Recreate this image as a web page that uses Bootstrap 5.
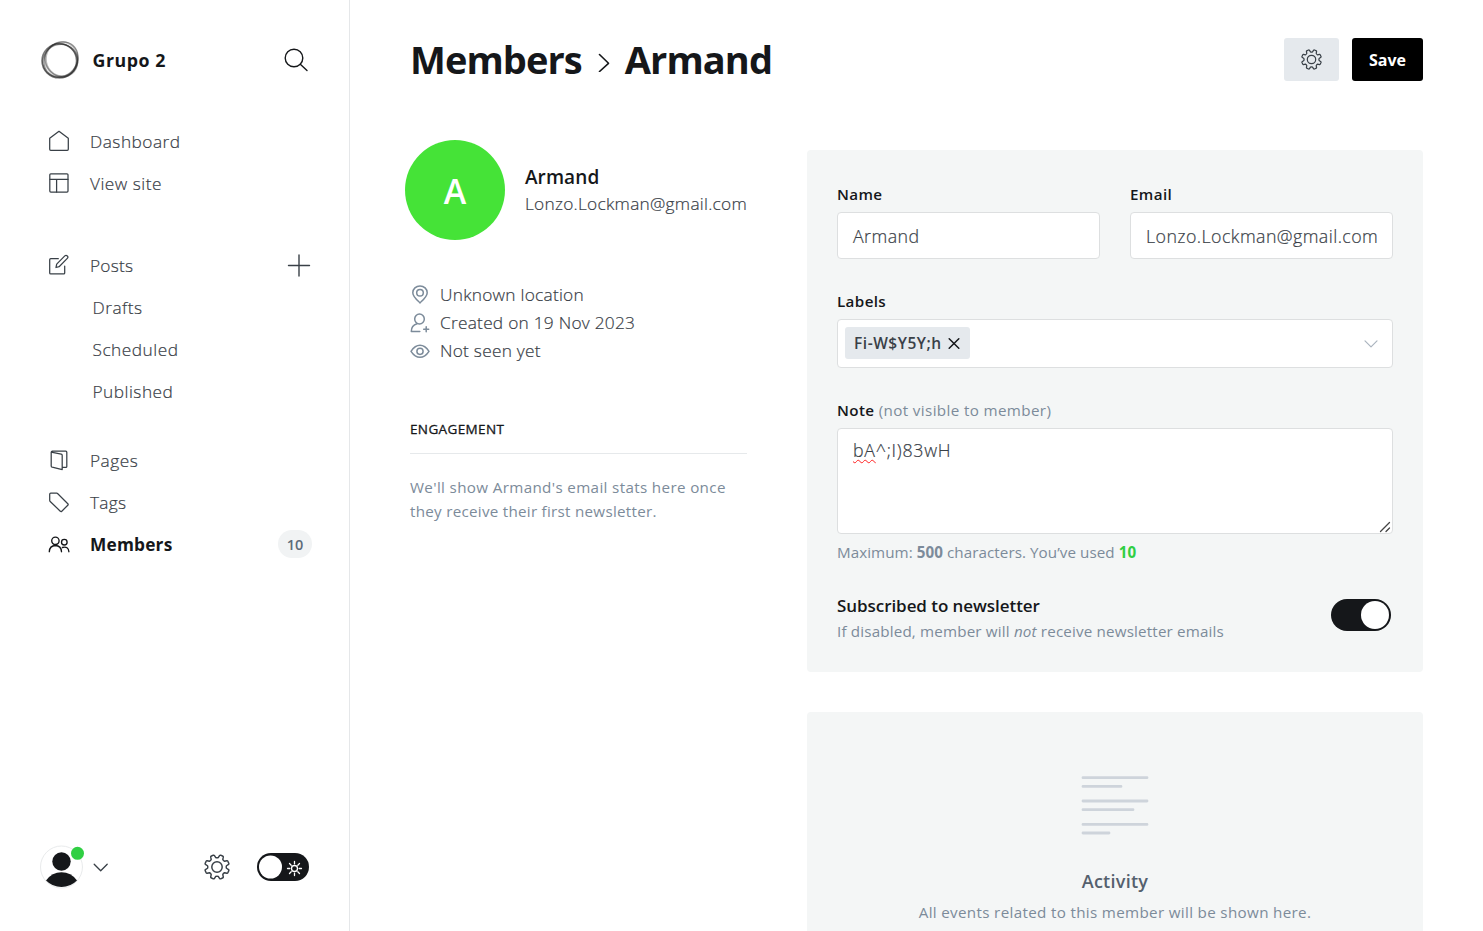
<!DOCTYPE html>
<html lang="en">
<head>
<meta charset="utf-8">
<title>Members - Armand</title>
<link href="https://cdn.jsdelivr.net/npm/bootstrap@5.3.0/dist/css/bootstrap.min.css" rel="stylesheet">
<style>
body{font-family:"Open Sans",sans-serif;color:#15171a;background:#fff;height:931px;overflow:hidden;font-size:17.3px}
svg{display:block;flex:none;fill:none;stroke-linecap:round;stroke-linejoin:round}
svg:not([stroke]){stroke:currentColor}
.sidebar{width:350px;border-right:1px solid #e5e7e9;color:#394047}
.brand{height:120px;padding:0 41px;color:#15171a}
.brand-name{font-size:17.8px;font-weight:700;margin-left:13.5px;letter-spacing:.54px}
.menu-row{height:42px;padding:0 38px 0 48px;font-weight:300;line-height:42px;letter-spacing:.49px;-webkit-text-stroke:.2px}
.menu-row .lbl{margin-left:20px;position:relative;top:1px}
.menu-row.sub{padding-left:92.5px}
.menu-row.sub .lbl{margin-left:0}
.menu-row.current{font-weight:700;color:#15171a;padding-right:37px;letter-spacing:.2px;-webkit-text-stroke:0}
.tight{letter-spacing:.25px}
.gap-lg{height:40px}
.gap-sm{height:27px}
.count{width:34px;height:28px;border-radius:14px;background:#f1f3f4;color:#5d6b79;font-size:14.5px;font-weight:600;line-height:30px;text-align:center;letter-spacing:0}
.foot{height:44px;padding:0 40px;margin-bottom:42px}
.user-pic{width:42px;height:42px}
.night{width:52px;height:28px;border-radius:14px;background:#15171a;color:#fff;margin-left:27.5px}
.content{padding:0 60px}
.topbar{height:119px}
h1{font-size:38px;font-weight:700;line-height:50px;margin:0 0 1px;letter-spacing:-.92px}
.h1-sep{margin:5px 15px 0 16px}
.btn-gear{width:55px;height:43px;border-radius:3px;background:#e5e9ed;color:#394047;padding:0}
.btn-save{width:71px;height:43px;border-radius:3px;background:#000;color:#fff;font-size:16px;font-weight:700;padding:0}
.actions{gap:13px}
.profile{width:337px;padding-top:21px}
.face{width:100px;height:100px;background:#45e337;color:#fff;font-size:34px;font-weight:600;margin-left:-5px;padding-top:3px}
.who{margin-left:20px}
.pname{font-size:19px;font-weight:600;line-height:27px;letter-spacing:.1px}
.soft{color:#394047;font-weight:300;letter-spacing:.25px;-webkit-text-stroke:.2px}
.pmail{line-height:26px;letter-spacing:.27px}
.meta{color:#7c8b9a;padding-top:41px}
.meta>div{height:28px}
.meta .soft{margin-left:10px}
.eng{font-size:13.5px;letter-spacing:.37px;border-bottom:1px solid #e6e9eb;height:40px;line-height:31px;margin-top:49px;-webkit-text-stroke:.3px}
.hint{color:#7c8b9a;font-size:15.2px;line-height:24px;letter-spacing:.35px}
.hint.stats{margin-top:21px}
.stats-2{letter-spacing:.27px}
.forms{width:616px;padding-top:31px}
.panel{background:#f4f6f6;border-radius:4px}
.panel-form{height:522px;padding:32px 30px 0}
.panel-activity{height:260px;margin-top:40px;padding-top:63px}
.fields{gap:30px}
.fields>div{width:263px}
.cap{font-size:15.2px;font-weight:600;line-height:24px;letter-spacing:.37px}
.cap-note{font-weight:400;color:#7c8b9a}
.cap-next{margin-top:30px}
.box{background:#fff;border:1px solid #dddfe0;border-radius:4px;font-weight:300;color:#394047;font-size:17.8px;margin-top:6px;letter-spacing:.44px;-webkit-text-stroke:.2px}
.box-line{height:47px;padding:2px 15px 0}
.box-tags{height:49px;padding:0 13px 2px 7px}
.box-note{height:106px;padding:8px 15px;letter-spacing:.74px}
.token{background:#e5e9ed;border-radius:3px;width:125px;height:32px;font-size:15.5px;font-weight:600;color:#394047;letter-spacing:.53px;-webkit-text-stroke:0;padding:0 10px 0 9px}
.token span{padding-top:2px}
.squig{text-decoration:underline wavy #f22 1.3px;text-underline-offset:2px;text-decoration-skip-ink:none}
.limit{margin-top:6px;letter-spacing:.06px}
.news{margin-top:28px;padding-right:2px}
.news-title{font-weight:600;font-size:17px;line-height:27px;letter-spacing:-.06px}
.news-hint{letter-spacing:.165px}
.switch-on{width:60px;height:32px;border-radius:16px;background:#15171a;padding:2px;margin-top:7px}
.knob{width:28px;height:28px;border-radius:50%;background:#fff}
.act-title{font-size:18px;font-weight:600;color:#54606d;line-height:28px;margin-top:32px;letter-spacing:.26px}
.act-hint{margin-top:5px;letter-spacing:.33px}
</style>
</head>
<body class="d-flex">
<svg width="0" height="0" class="position-absolute"><defs><g id="gear"><path d="M8.72-1.15Q8.2 0 8.72 1.15L10.72 2.47Q11.1 2.8 10.9 3.4L9.9 5.5Q9.7 5.9 9.1 5.8L6.98 5.36Q5.8 5.8 5.36 6.98L5.8 9.1Q5.9 9.7 5.5 9.9L3.4 10.9Q2.8 11.1 2.47 10.72L1.15 8.72Q0 8.2-1.15 8.72L-2.47 10.72Q-2.8 11.1-3.4 10.9L-5.5 9.9Q-5.9 9.7-5.8 9.1L-5.36 6.98Q-5.8 5.8-6.98 5.36L-9.1 5.8Q-9.7 5.9-9.9 5.5L-10.9 3.4Q-11.1 2.8-10.72 2.47L-8.72 1.15Q-8.2 0-8.72-1.15L-10.72-2.47Q-11.1-2.8-10.9-3.4L-9.9-5.5Q-9.7-5.9-9.1-5.8L-6.98-5.36Q-5.8-5.8-5.36-6.98L-5.8-9.1Q-5.9-9.7-5.5-9.9L-3.4-10.9Q-2.8-11.1-2.47-10.72L-1.15-8.72Q0-8.2 1.15-8.72L2.47-10.72Q2.8-11.1 3.4-10.9L5.5-9.9Q5.9-9.7 5.8-9.1L5.36-6.98Q5.8-5.8 6.98-5.36L9.1-5.8Q9.7-5.9 9.9-5.5L10.9-3.4Q11.1-2.8 10.72-2.47Z"/><circle r="4.8"/></g></defs></svg>
<aside class="sidebar d-flex flex-column flex-shrink-0 vh-100">
  <div class="brand d-flex align-items-center">
    <svg width="38" height="38" viewBox="0 0 38 38" stroke="#222"><ellipse cx="18.300" cy="19.800" rx="17.300" ry="17" stroke-width="1.600" opacity=".6"/><ellipse cx="20" cy="18.300" rx="18.300" ry="16" transform="rotate(-50 20 18.300)" stroke-width="1.200" opacity=".45"/><ellipse cx="20.200" cy="19" rx="17.200" ry="15.600" transform="rotate(50 20 19)" stroke-width="1.500" opacity=".4"/><ellipse cx="19.300" cy="20" rx="17.600" ry="16.400" transform="rotate(-20 19 20)" stroke-width="1.300" opacity=".5"/><ellipse cx="21" cy="18" rx="16" ry="17" stroke-width="1.600" opacity=".3"/></svg>
    <span class="brand-name">Grupo 2</span>
    <svg class="ms-auto" width="24" height="24" viewBox="0 0 24 24" stroke-width="1.4"><circle cx="10" cy="10" r="8.8"/><path d="M16.3 16.3l6.7 6.2"/></svg>
  </div>
  <nav>
    <div class="menu-row d-flex align-items-center"><svg width="22" height="22" viewBox="0 0 22 22" stroke-width="1.25"><path d="M1.7 8.3 11 1.3l9.3 7v11q0 1-1 1H2.7q-1 0-1-1z"/></svg><span class="lbl">Dashboard</span></div>
    <div class="menu-row d-flex align-items-center"><svg width="22" height="22" viewBox="0 0 22 22" stroke-width="1.25"><rect x="1.8" y="1.8" width="18.2" height="18.2" rx="1"/><path d="M2 7.3h18M8.6 7.3V20"/></svg><span class="lbl">View site</span></div>
    <div class="gap-lg"></div>
    <div class="menu-row d-flex align-items-center"><svg width="22" height="22" viewBox="0 0 22 22" stroke-width="1.25"><path d="M10.3 4.7H2.7q-1 0-1 1v13.2q0 1 1 1h13q1 0 1-1v-6.8M8 13.5l.7-3.4 8.1-8.2q1.2-1.1 2.5 0 1.2 1.3 0 2.500l-8.200 8.300z"/></svg><span class="lbl tight">Posts</span><svg class="ms-auto" width="24" height="24" viewBox="0 0 24 24" stroke-width="1.4"><path d="M1.5 12.500h21M12 2v21"/></svg></div>
    <div class="menu-row sub"><span class="lbl">Drafts</span></div>
    <div class="menu-row sub"><span class="lbl">Scheduled</span></div>
    <div class="menu-row sub"><span class="lbl">Published</span></div>
    <div class="gap-sm"></div>
    <div class="menu-row d-flex align-items-center"><svg width="22" height="22" viewBox="0 0 22 22" stroke-width="1.25"><path d="M3.200 3.200 13.200 5.200q1 .2 1 1.200v14.200l-10-2.400q-1-.3-1-1.300zM3.200 3.200Q3.400 2.200 4.200 2.200h13.600q1 0 1 1v14.200q0 .9-1 .9h-3.400"/></svg><span class="lbl">Pages</span></div>
    <div class="menu-row d-flex align-items-center"><svg width="22" height="22" viewBox="0 0 22 22" stroke-width="1.250"><path d="M1.700 3.200q0-1 1-1h6q.6 0 1.100.5l10 10q.8.800 0 1.500l-6 6q-.8.800-1.500 0L2.200 10.500q-.5-.5-.5-1.200z"/></svg><span class="lbl tight">Tags</span></div>
    <div class="menu-row current d-flex align-items-center"><svg width="22" height="22" viewBox="0 0 22 22" stroke-width="1.350"><circle cx="7.400" cy="7.800" r="3.700"/><circle cx="16.300" cy="9.200" r="2.800"/><path d="M1.300 18.700q.3-6.100 6.100-6.200 5.700.1 6.100 6.200M14.400 14.500q6-1.600 6.500 4.200"/></svg><span class="lbl">Members</span><span class="count ms-auto">10</span></div>
  </nav>
  <div class="foot mt-auto d-flex align-items-center">
    <svg class="user-pic" viewBox="0 0 42 42" overflow="visible" stroke="none"><circle cx="21.500" cy="21" r="21" fill="#fff" stroke="#e9ebec"/><circle cx="21.500" cy="15.500" r="9.200" fill="#15171a"/><path d="M6 34.500q6-8.200 15.500-8.200T37 34.500q-6.500 6.500-15.500 6.500T6 34.500z" fill="#15171a"/><circle cx="37.500" cy="7.300" r="6.500" fill="#30cf43"/></svg>
    <svg class="ms-2 me-auto" width="21" height="14" viewBox="0 0 21 14" stroke-width="1.300"><path d="m4.200 4.200 6.500 6.600 6.500-6.600"/></svg>
    <svg width="26" height="26" viewBox="-12 -12 24 24" stroke-width="1.350"><use href="#gear"/></svg>
    <span class="night d-flex align-items-center"><svg width="52" height="28" viewBox="0 0 52 28" stroke-width="1.300"><circle cx="13.500" cy="14" r="11.500" fill="#fff" stroke="none"/><circle cx="37.500" cy="15.500" r="3"/><path d="M37.500 8.500v2.300M37.500 20.200v2.300M30.500 15.500h2.300M42.200 15.500h2.300M32.500 10.500l1.700 1.700M40.800 18.800l1.700 1.700M32.500 20.500l1.700-1.700M40.800 12.200l1.700-1.700"/></svg></span>
  </div>
</aside>
<main class="content flex-grow-1">
  <header class="topbar d-flex align-items-center">
    <h1 class="d-flex align-items-center"><span>Members</span><svg class="h1-sep" width="12" height="20" viewBox="0 0 12 20" stroke-width="1.600"><path d="m1.500 2.500 9 8.800-9 8.200"/></svg><span>Armand</span></h1>
    <div class="actions d-flex ms-auto">
      <button class="btn btn-gear d-flex align-items-center justify-content-center"><svg width="21" height="21" viewBox="-12 -12 24 24" stroke-width="1.400"><use href="#gear"/></svg></button>
      <button class="btn btn-save">Save</button>
    </div>
  </header>
  <div class="d-flex justify-content-between">
    <section class="profile">
      <div class="d-flex align-items-center">
        <div class="face rounded-circle d-flex align-items-center justify-content-center">A</div>
        <div class="who"><div class="pname">Armand</div><div class="soft pmail">Lonzo.Lockman@gmail.com</div></div>
      </div>
      <div class="meta">
        <div class="d-flex align-items-center"><svg width="20" height="20" viewBox="0 0 20 20" stroke-width="1.500"><path d="M10 17.900C6.500 14.500 2.800 11.400 2.800 7.700a7.200 6.800 0 0 1 14.400 0c0 3.700-3.700 6.800-7.200 10.200z"/><circle cx="10" cy="7.800" r="3.300"/></svg><span class="soft">Unknown location</span></div>
        <div class="d-flex align-items-center"><svg width="20" height="20" viewBox="0 0 20 20" stroke-width="1.500"><ellipse cx="9.500" cy="6" rx="4.800" ry="5"/><path d="M7 10.700Q1.300 12.300 1.300 18.500h8.500M16.200 13.800v5M13.700 16.300h5"/></svg><span class="soft">Created on 19 Nov 2023</span></div>
        <div class="d-flex align-items-center"><svg width="20" height="20" viewBox="0 0 20 20" stroke-width="1.500"><path d="M1 10.300q4-6 9-6t9 6q-4 6-9 6t-9-6z"/><circle cx="10" cy="10.300" r="3.100"/></svg><span class="soft">Not seen yet</span></div>
      </div>
      <div class="eng">ENGAGEMENT</div>
      <div class="hint stats">We'll show Armand's email stats here once<br><span class="stats-2">they receive their first newsletter.</span></div>
    </section>
    <section class="forms">
      <div class="panel panel-form">
        <div class="fields d-flex">
          <div><div class="cap">Name</div><div class="box box-line d-flex align-items-center">Armand</div></div>
          <div><div class="cap">Email</div><div class="box box-line d-flex align-items-center">Lonzo.Lockman@gmail.com</div></div>
        </div>
        <div class="cap cap-next">Labels</div>
        <div class="box box-tags d-flex align-items-center">
          <span class="token d-flex align-items-center justify-content-between"><span>Fi-W$Y5Y;h</span><svg width="12" height="12" viewBox="0 0 12 12" stroke="#15171a" stroke-width="1.500"><path d="M1.200 1.700l9.600 9.600M10.800 1.700 1.200 11.300"/></svg></span>
          <svg class="ms-auto" width="16" height="10" viewBox="0 0 16 10" stroke="#aab4be" stroke-width="1.200"><path d="m2 2.800 6 6 6-6"/></svg>
        </div>
        <div class="cap cap-next">Note <span class="cap-note">(not visible to member)</span></div>
        <div class="box box-note position-relative"><span class="squig">bA</span>^;I)83wH<svg class="position-absolute bottom-0 end-0" width="13" height="13" viewBox="0 0 13 13" stroke="#444" stroke-width="1.300"><path d="M1.500 11.500l9-9M7 11.500l3.500-3.500"/></svg></div>
        <div class="hint limit">Maximum: <b>500</b> characters. You’ve used <b style="color:#30cf43">10</b></div>
        <div class="news d-flex justify-content-between">
          <div><div class="news-title">Subscribed to newsletter</div><div class="hint news-hint">If disabled, member will <i>not</i> receive newsletter emails</div></div>
          <div class="switch-on d-flex justify-content-end"><span class="knob"></span></div>
        </div>
      </div>
      <div class="panel panel-activity d-flex flex-column align-items-center">
        <svg width="68" height="60" viewBox="0 0 68 60" stroke="#ced4db" stroke-width="2.800"><path d="M2 2.700h64M2 11.400h38M2 26h64M2 34.700h50M2 49.400h64M2 58h26"/></svg>
        <div class="act-title">Activity</div>
        <div class="hint act-hint">All events related to this member will be shown here.</div>
      </div>
    </section>
  </div>
</main>
<script src="https://cdn.jsdelivr.net/npm/bootstrap@5.3.0/dist/js/bootstrap.bundle.min.js"></script>
</body>
</html>
